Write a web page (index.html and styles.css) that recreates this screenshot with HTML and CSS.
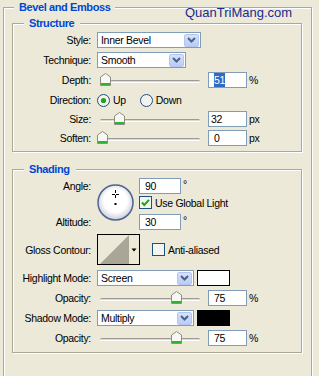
FILE: index.html
```html
<!DOCTYPE html>
<html lang="en">
  <head>
    <meta charset="UTF-8" />
    <title>Bevel and Emboss</title>
    <link rel="stylesheet" href="styles.css">
  </head>
  <body>
    <div class="panel">
      <div class="group outer">
        <div class="group-title">Bevel and Emboss</div>

        <div class="group inner structure">
          <div class="group-title">Structure</div>

          <div class="row first">
            <span class="label">Style:</span>
            <div class="combo w-style">
              <span>Inner Bevel</span>
              <span class="combo-btn"><svg width="9" height="6" viewBox="0 0 9 6"><path d="M1 1 L4.5 4.5 L8 1" fill="none" stroke="#4d6185" stroke-width="2"/></svg></span>
            </div>
          </div>

          <div class="row">
            <span class="label">Technique:</span>
            <div class="combo w-tech">
              <span>Smooth</span>
              <span class="combo-btn"><svg width="9" height="6" viewBox="0 0 9 6"><path d="M1 1 L4.5 4.5 L8 1" fill="none" stroke="#4d6185" stroke-width="2"/></svg></span>
            </div>
          </div>

          <div class="row">
            <span class="label">Depth:</span>
            <div class="slider">
              <div class="track"></div>
              <svg class="thumb" style="left: 3px" width="11" height="13" viewBox="0 0 11 13"><path d="M0.5 4 L5.5 0.5 L10.5 4 V12.5 H0.5 Z" fill="#f7f7f4" stroke="#8f8d80"/><rect x="1" y="10" width="9" height="2" fill="#2fb22f"/></svg>
            </div>
            <div class="field"><span class="sel">51</span></div>
            <span class="unit">%</span>
          </div>

          <div class="row">
            <span class="label">Direction:</span>
            <span class="opt">
              <svg width="13" height="13" viewBox="0 0 13 13"><circle cx="6.5" cy="6.5" r="6" fill="#f2f2ee" stroke="#1c5180"/><circle cx="6.5" cy="6.5" r="2.6" fill="#21a121"/></svg>
              Up
            </span>
            <span class="opt">
              <svg width="13" height="13" viewBox="0 0 13 13"><circle cx="6.5" cy="6.5" r="6" fill="#f2f2ee" stroke="#1c5180"/></svg>
              Down
            </span>
          </div>

          <div class="row tight">
            <span class="label">Size:</span>
            <div class="slider">
              <div class="track"></div>
              <svg class="thumb" style="left: 17px" width="11" height="13" viewBox="0 0 11 13"><path d="M0.5 4 L5.5 0.5 L10.5 4 V12.5 H0.5 Z" fill="#f7f7f4" stroke="#8f8d80"/><rect x="1" y="10" width="9" height="2" fill="#2fb22f"/></svg>
            </div>
            <div class="field near">32</div>
            <span class="unit">px</span>
          </div>

          <div class="row tight">
            <span class="label">Soften:</span>
            <div class="slider">
              <div class="track"></div>
              <svg class="thumb" style="left: 0px" width="11" height="13" viewBox="0 0 11 13"><path d="M0.5 4 L5.5 0.5 L10.5 4 V12.5 H0.5 Z" fill="#f7f7f4" stroke="#8f8d80"/><rect x="1" y="10" width="9" height="2" fill="#2fb22f"/></svg>
            </div>
            <div class="field">0</div>
            <span class="unit">px</span>
          </div>
        </div>

        <div class="group inner shading">
          <div class="group-title">Shading</div>

          <div class="angle-block">
            <span class="label a-label">Angle:</span>
            <svg class="dial" width="38" height="38" viewBox="0 0 38 38">
              <defs>
                <radialGradient id="dialFill" cx="50%" cy="45%" r="55%">
                  <stop offset="0.6" stop-color="#ffffff"/>
                  <stop offset="1" stop-color="#c9cbd6"/>
                </radialGradient>
              </defs>
              <circle cx="18.5" cy="18.5" r="17.5" fill="url(#dialFill)" stroke="#4e6493" stroke-width="1.5"/>
              <path d="M18.5 6 V9 M18.5 11 V14 M15 10.5 H18 M19 10.5 H22" stroke="#000" stroke-width="1"/>
              <rect x="17.5" y="19" width="2" height="2" fill="#000"/>
            </svg>
            <div class="a-input">
              <div class="field wide">90</div>
              <span class="unit deg">°</span>
            </div>
            <span class="check-opt">
              <svg width="13" height="13" viewBox="0 0 13 13"><rect x="0.5" y="0.5" width="12" height="12" fill="#f4f4f0" stroke="#1c5180"/><path d="M3 6.5 L5.3 9 L10 3.8" fill="none" stroke="#21a121" stroke-width="2"/></svg>
              Use Global Light
            </span>
            <span class="label b-label">Altitude:</span>
            <div class="b-input">
              <div class="field wide">30</div>
              <span class="unit deg">°</span>
            </div>
          </div>

          <div class="row contour-row">
            <span class="label">Gloss Contour:</span>
            <div class="contour">
              <svg width="41" height="29" viewBox="0 0 41 29"><polygon points="2,29 31,0 31,29" fill="#a9a698"/><polygon points="33.5,13.5 38.5,13.5 36,16.5" fill="#000"/></svg>
            </div>
            <span class="check-opt aa">
              <svg width="13" height="13" viewBox="0 0 13 13"><rect x="0.5" y="0.5" width="12" height="12" fill="#f4f4f0" stroke="#1c5180"/></svg>
              Anti-aliased
            </span>
          </div>

          <div class="row mode-row">
            <span class="label">Highlight Mode:</span>
            <div class="combo w-mode">
              <span>Screen</span>
              <span class="combo-btn"><svg width="9" height="6" viewBox="0 0 9 6"><path d="M1 1 L4.5 4.5 L8 1" fill="none" stroke="#4d6185" stroke-width="2"/></svg></span>
            </div>
            <div class="swatch white"></div>
          </div>

          <div class="row">
            <span class="label">Opacity:</span>
            <div class="slider">
              <div class="track"></div>
              <svg class="thumb" style="left: 74px" width="11" height="13" viewBox="0 0 11 13"><path d="M0.5 4 L5.5 0.5 L10.5 4 V12.5 H0.5 Z" fill="#f7f7f4" stroke="#8f8d80"/><rect x="1" y="10" width="9" height="2" fill="#2fb22f"/></svg>
            </div>
            <div class="field">75</div>
            <span class="unit">%</span>
          </div>

          <div class="row">
            <span class="label">Shadow Mode:</span>
            <div class="combo w-mode">
              <span>Multiply</span>
              <span class="combo-btn"><svg width="9" height="6" viewBox="0 0 9 6"><path d="M1 1 L4.5 4.5 L8 1" fill="none" stroke="#4d6185" stroke-width="2"/></svg></span>
            </div>
            <div class="swatch black"></div>
          </div>

          <div class="row">
            <span class="label">Opacity:</span>
            <div class="slider">
              <div class="track"></div>
              <svg class="thumb" style="left: 74px" width="11" height="13" viewBox="0 0 11 13"><path d="M0.5 4 L5.5 0.5 L10.5 4 V12.5 H0.5 Z" fill="#f7f7f4" stroke="#8f8d80"/><rect x="1" y="10" width="9" height="2" fill="#2fb22f"/></svg>
            </div>
            <div class="field">75</div>
            <span class="unit">%</span>
          </div>
        </div>
      </div>

      <div class="watermark">QuanTriMang.com</div>
    </div>
  </body>
</html>
```

FILE: styles.css
```css
* {
  box-sizing: border-box;
}

html,
body {
  margin: 0;
  height: 376px;
  overflow: hidden;
}

body {
  background: #ece9d8;
  font-family: "Liberation Sans", Arial, sans-serif;
  font-size: 10.5px;
  letter-spacing: -0.3px;
  color: #000;
}

.panel {
  position: relative;
  padding: 7px 0 0 3px;
}

/* etched group boxes */
.group {
  border: 1px solid #aca899;
  box-shadow: 1px 1px 0 #fff, inset 1px 1px 0 #fff;
}

.group-title {
  width: fit-content;
  margin-top: -8px;
  height: 14px;
  line-height: 14px;
  background: #ece9d8;
  color: #0046d5;
  font-size: 11px;
  font-weight: bold;
  letter-spacing: -0.4px;
}

.outer {
  width: 309px;
  padding: 0 9px 60px 8px;
  border-bottom: none;
}

.outer > .group-title {
  margin-left: 2px;
  padding: 0 5px;
}

.inner {
  padding: 0 0 5px 10px;
}

.inner > .group-title {
  margin-left: 1px;
  padding: 0 6px 0 5px;
}

.structure {
  margin-top: 9px;
}

.shading {
  margin-top: 17px;
  padding-bottom: 6px;
}

.watermark {
  position: absolute;
  left: 185px;
  top: 5px;
  font-size: 13px;
  line-height: 15px;
  letter-spacing: 0;
  color: #1b2b8e;
}

/* rows */
.row {
  display: flex;
  align-items: center;
  height: 16px;
  margin-top: 4px;
}

.row.first {
  margin-top: 2px;
}

.row.tight {
  margin-top: 3px;
}

.label {
  display: flex;
  justify-content: flex-end;
  flex: none;
  width: 68px;
  margin-right: 6px;
  white-space: nowrap;
}

/* combo boxes */
.combo {
  display: flex;
  align-items: center;
  justify-content: space-between;
  flex: none;
  height: 16px;
  padding: 0 1px 0 3px;
  border: 1px solid #7f9db9;
  background: #fff;
}

.w-style {
  width: 104px;
}

.w-tech {
  width: 89px;
}

.w-mode {
  width: 97px;
}

.combo-btn {
  display: flex;
  align-items: center;
  justify-content: center;
  width: 15px;
  height: 13px;
  border: 1px solid #b4c6f0;
  border-radius: 2px;
  background: linear-gradient(#d6e1fc, #b9cbf8);
}

/* sliders */
.slider {
  position: relative;
  flex: none;
  width: 103px;
  height: 16px;
  margin-right: 8px;
}

.track {
  width: 100px;
  height: 3px;
  margin: 8px 0 0 3px;
  border-top: 1px solid #9e9c92;
  border-bottom: 1px solid #fff;
  border-radius: 2px;
  background: #dcdad0;
}

.thumb {
  position: absolute;
  top: 1px;
}

/* text fields */
.field {
  flex: none;
  width: 39px;
  height: 16px;
  padding-left: 5px;
  line-height: 14px;
  border: 1px solid #7f9db9;
  background: #fff;
}

.field.near {
  padding-left: 2px;
}

.field.wide {
  width: 42px;
}

.sel {
  display: inline-block;
  background: #316ac5;
  color: #fff;
}

.unit {
  margin-left: 2px;
}

.unit.deg {
  align-self: flex-start;
  line-height: 12px;
}

/* radios and checks */
.opt {
  display: flex;
  align-items: center;
  gap: 3px;
  margin-right: 14px;
}

.check-opt {
  display: flex;
  align-items: center;
  gap: 3px;
}

/* angle block */
.angle-block {
  display: grid;
  grid-template-columns: 74px 42px auto;
  grid-template-rows: 16px 20px 16px;
  margin-top: 2px;
}

.a-label {
  grid-column: 1;
  grid-row: 1;
  align-self: center;
}

.b-label {
  grid-column: 1;
  grid-row: 3;
  align-self: center;
}

.dial {
  grid-column: 2;
  grid-row: 1 / 4;
  margin-top: 6px;
}

.a-input,
.b-input {
  display: flex;
  grid-column: 3;
}

.a-input {
  grid-row: 1;
}

.b-input {
  grid-row: 3;
}

.angle-block .check-opt {
  grid-column: 3;
  grid-row: 2;
  margin-top: 2px;
  align-self: start;
}

/* contour and swatches */
.contour-row {
  height: 31px;
}

.contour {
  flex: none;
  width: 43px;
  height: 31px;
  border: 1px solid #000;
}

.contour svg {
  display: block;
}

.check-opt.aa {
  margin-left: 12px;
}

.mode-row {
  margin-top: 5px;
}

.swatch {
  flex: none;
  width: 33px;
  height: 16px;
  margin-left: 3px;
  border: 1px solid #000;
}

.swatch.white {
  background: #fff;
}

.swatch.black {
  background: #000;
}
```
